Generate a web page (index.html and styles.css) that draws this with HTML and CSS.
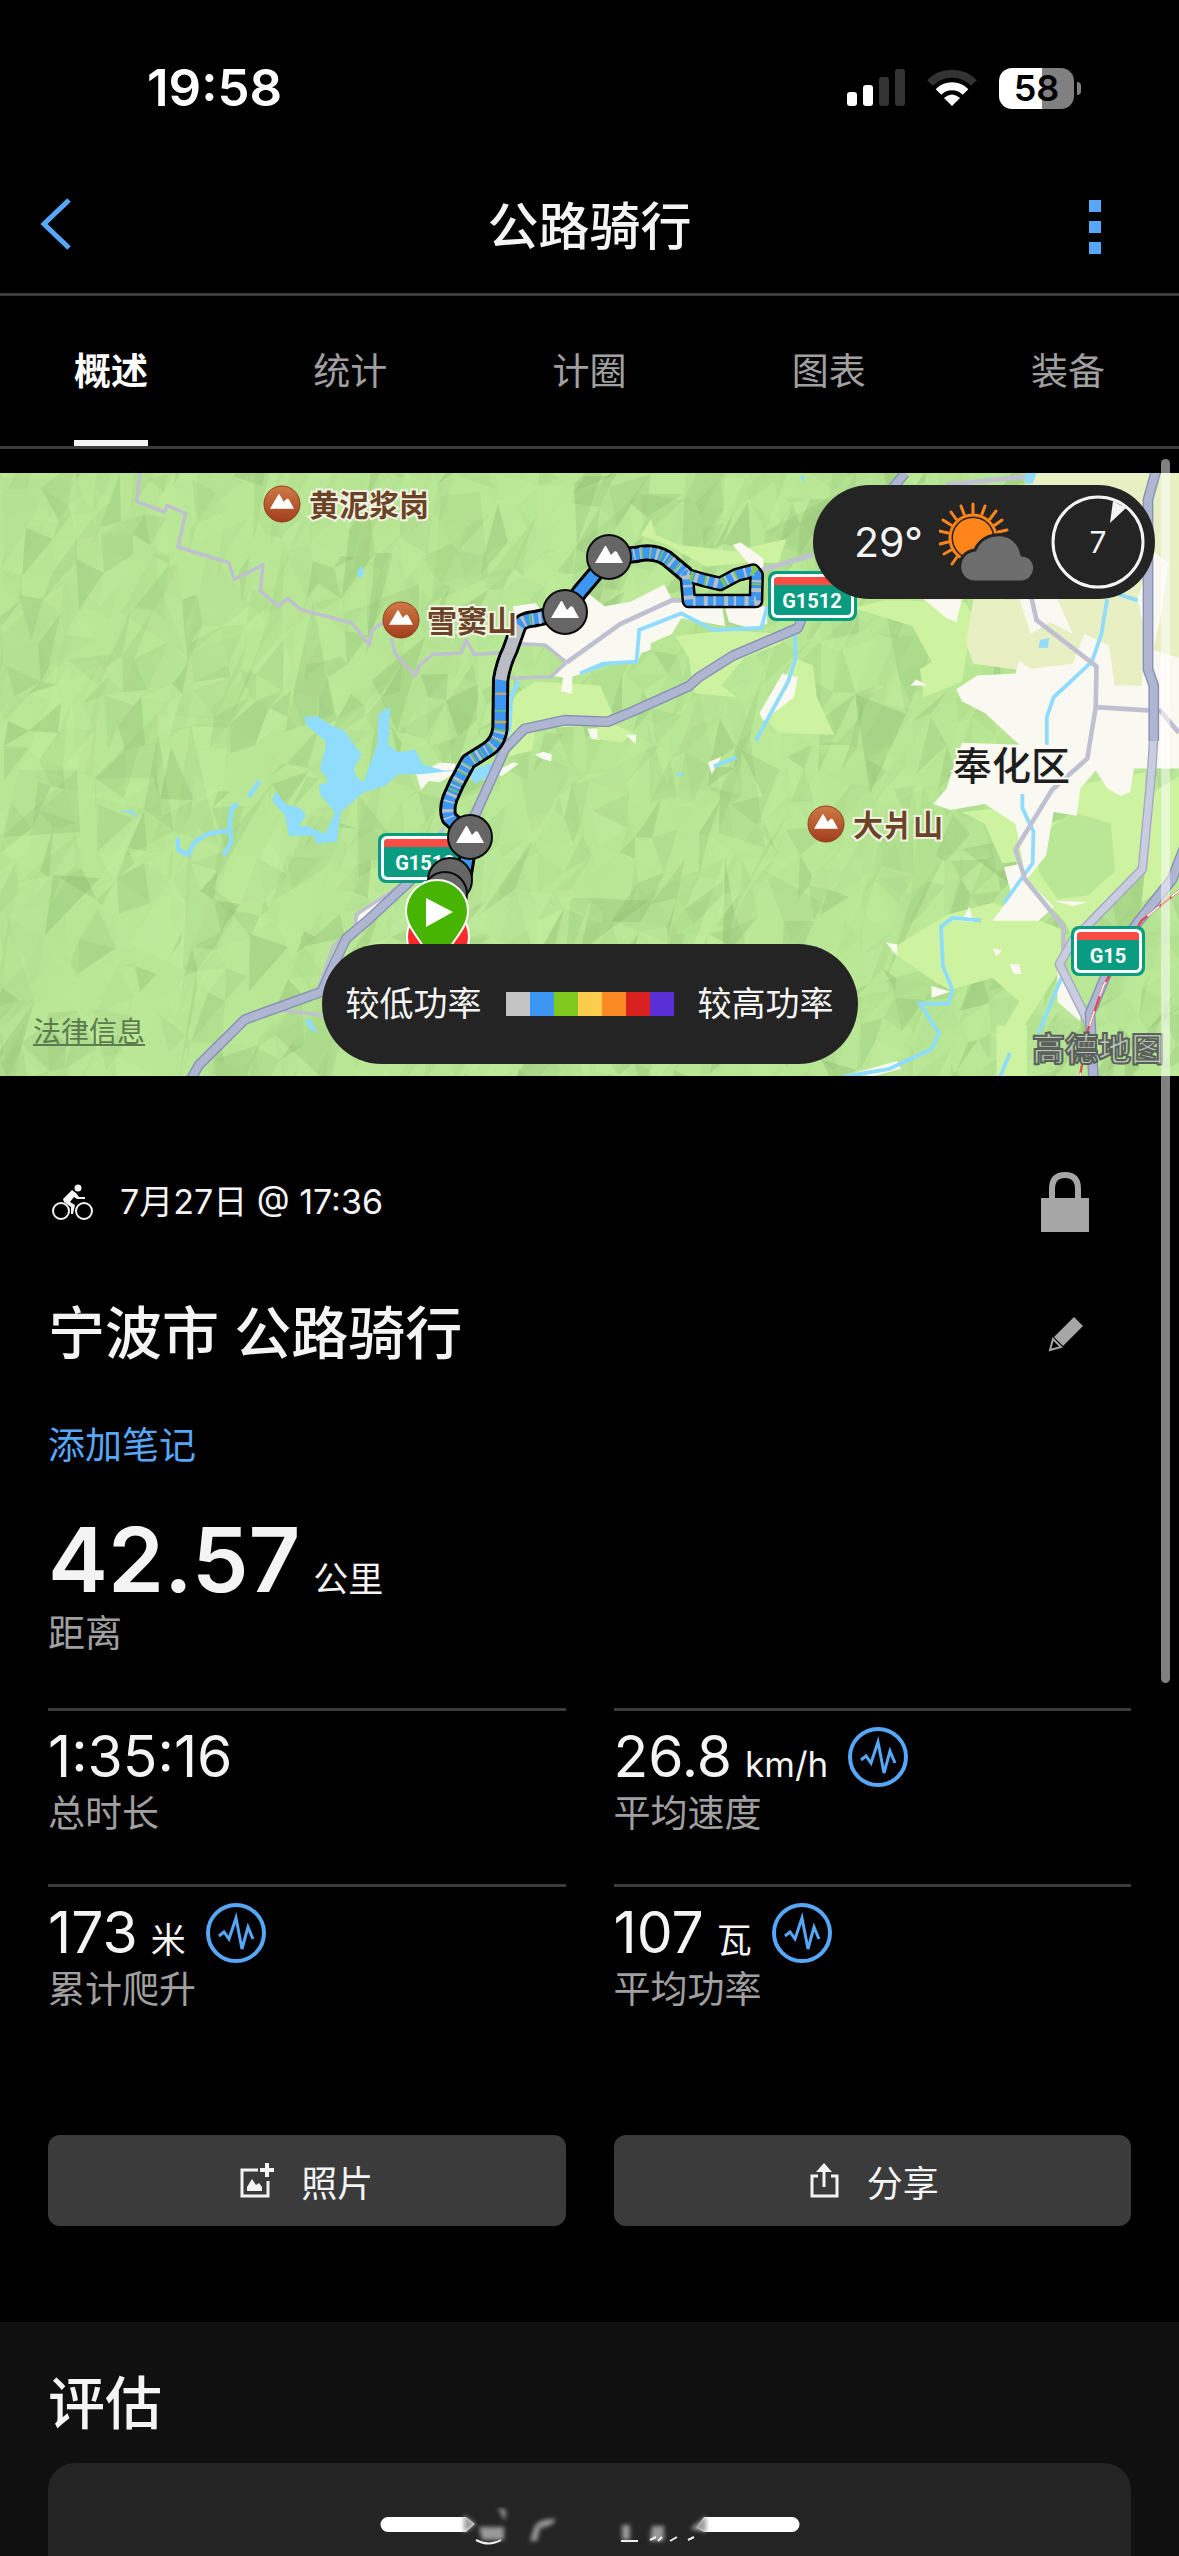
FILE: index.html
```html
<!DOCTYPE html>
<html lang="zh-CN">
<head>
  <meta charset="utf-8">
  <meta name="viewport" content="width=device-width, initial-scale=1">
  <title>公路骑行</title>
  <link rel="stylesheet" href="styles.css">
</head>
<body>
  <!-- shared icons -->
  <svg class="sprite" aria-hidden="true">
    <symbol id="peaks" viewBox="0 0 28 18">
      <path fill="#fff" d="M0 18 L10 1 L11 1 L16 10 L20 6 L22 7 L28 18 Z"/>
    </symbol>
    <symbol id="pulse" viewBox="0 0 60 60">
      <circle cx="30" cy="30" r="28" fill="none" stroke="#56a7f7" stroke-width="4"/>
      <path d="M13 33 L18 29 L23 36 L30 15 L36 46 L42 24 L47 36" fill="none" stroke="#56a7f7" stroke-width="3"/>
    </symbol>
  </svg>

  <div class="status-bar">
    <span class="clock">19:58</span>
    <div class="status-icons">
      <svg width="58" height="38" viewBox="0 0 58 38">
        <rect x="0" y="23" width="10" height="14" rx="3" fill="#fff"/>
        <rect x="16" y="16" width="10" height="21" rx="3" fill="#fff"/>
        <rect x="32" y="8" width="10" height="29" rx="3" fill="#333"/>
        <rect x="48" y="0" width="10" height="37" rx="3" fill="#333"/>
      </svg>
      <svg width="50" height="38" viewBox="0 0 50 38">
        <path d="M3 14 A31 31 0 0 1 47 14" fill="none" stroke="#333" stroke-width="8"/>
        <path d="M11.500 23 A19 19 0 0 1 38.500 23" fill="none" stroke="#fff" stroke-width="8"/>
        <path d="M17 29 Q25 22 33 29 L25 37 Z" fill="#fff"/>
      </svg>
      <div class="battery"><span class="battery-level">58</span></div>
    </div>
  </div>

  <header class="header">
    <button class="icon-button" aria-label="返回">
      <svg width="32" height="58" viewBox="0 0 32 58"><path d="M29 2 L4 26 L29 50" fill="none" stroke="#56a7f7" stroke-width="5"/></svg>
    </button>
    <h1 class="header-title">公路骑行</h1>
    <button class="icon-button" aria-label="更多">
      <svg width="12" height="54" viewBox="0 0 12 54" fill="#56a7f7"><path d="M0 0h12v12H0zM0 21h12v12H0zM0 42h12v12H0z"/></svg>
    </button>
  </header>

  <nav class="tabs">
    <a class="tab active" href="#overview">概述</a>
    <a class="tab" href="#stats">统计</a>
    <a class="tab" href="#laps">计圈</a>
    <a class="tab" href="#charts">图表</a>
    <a class="tab" href="#gear">装备</a>
  </nav>

  <div class="map">
    <svg class="map-canvas" viewBox="0 0 1179 603" preserveAspectRatio="xMidYMid slice">
      <defs>
        <linearGradient id="brown" x1="0" y1="0" x2="0" y2="1">
          <stop offset="0" stop-color="#cf7a45"/><stop offset="1" stop-color="#a23d1d"/>
        </linearGradient>
      </defs>
      <rect width="1179" height="603" fill="#b9e796"/>
      <g id="relief"></g>

      <!-- west side -->
      <g transform="translate(0 -13) scale(.3827 .3954)">
        <path fill="#cdf2a0" d="M1350 590 L1400 560 L1568 570 L1600 640 L1568 670 L1400 680 L1390 735 L1330 750 L1320 650Z"/>
        <path fill="#faf9f1" d="M1340 370 L1400 362 L1430 400 L1500 370 L1540 340 L1580 370 L1700 350 L1700 480 L1568 525 L1495 548 L1495 592 L1465 585 L1472 550 L1440 545 L1480 510 L1420 465 L1360 470ZM1088 795 L1150 765 L1190 768 L1190 790 L1150 815 L1120 812 L1100 835ZM1398 745 L1420 738 L1442 745 L1440 762 L1415 755ZM1290 790 L1340 765 L1355 768 L1310 800ZM1535 680 L1568 685 L1568 708 L1545 705ZM925 1180 L945 1140 L1010 1095 L980 1150Z"/>
        <path fill="#90dcfc" d="M795 650 L830 648 L865 670 L900 685 L945 745 L925 780 L930 800 L950 815 L985 720 L990 640 L1020 625 L1015 720 L1040 740 L1085 732 L1105 770 L1160 785 L1240 780 L1290 765 L1300 785 L1240 820 L1230 800 L1190 785 L1100 795 L1040 795 L1005 825 L950 840 L915 870 L890 890 L880 965 L825 970 L820 950 L755 950 L745 900 L710 860 L722 838 L745 870 L785 880 L800 900 L780 925 L800 925 L850 945 L875 890 L835 845 L835 820 L860 815 L835 780 L850 730 L850 710 L800 670ZM932 285 L945 265 L952 285 L940 302ZM312 887 L345 885 L365 908 L345 895ZM795 1415 L812 1415 L830 1450 L810 1440Z"/>
        <path class="river" stroke-width="12" d="M678 812 L650 852 M622 870 L605 880 L600 925 L605 965 L585 1000 M598 938 L545 945 L510 965 L490 998 L465 985 L465 955"/>
        <path class="river" stroke-width="12" d="M1355 560 L1335 600 L1330 680 L1300 750 M1520 535 L1600 510"/>
        <path class="road" stroke-width="9" d="M365 33 L358 105 L430 132 L437 115 L485 135 L465 220 L598 260 L612 302 L687 265 L680 332 L728 370 L752 350 L785 378 L920 412 L965 468 L972 430 L1020 400M1022 450 L1033 490 L1085 545 L1095 520 L1130 492 L1205 488 L1218 455 L1240 492 L1310 487M1360 465 L1425 468 L1480 512M1335 552 L1440 548 L1480 512M1160 930 L1050 1075 L930 1150 L930 1180 L870 1230 L832 1340M740 1392 L850 1405"/>
      </g>

      <!-- east side, the plain around the town -->
      <g transform="translate(580 -13) scale(.382 .3954)">
        <path fill="#cdf2a0" d="M160 190 L185 150 L200 190 L260 215 L400 230 L540 200 L520 260 L440 260 L330 270 L230 215ZM250 445 L390 430 L540 440 L525 465 L430 500 L370 570 L410 600 L300 590 L285 500ZM560 500 L610 520 L620 600 L665 695 L520 690 L490 660ZM25 680 L90 670 L140 690 L110 715 L45 705ZM600 400 L800 355 L1010 360 L1030 400 L1010 500 L1000 560 L900 600 L890 530 L920 510 L870 420 L700 370ZM1310 820 L1480 790 L1475 1030 L1290 1210 L1270 1170 L1150 1040 L1160 940 L1290 900ZM1000 890 L1100 880 L1160 920 L1155 1015 L1105 1020 L1060 920ZM960 1150 L1080 1120 L1270 1190 L1250 1300 L1130 1480 L1090 1470 L1150 1370 L1080 1310 L970 1340 L930 1320 L810 1240ZM1500 840 L1568 800 L1568 1050 L1470 1120ZM1090 1430 L1170 1430 L1170 1568 L1090 1568Z"/>
        <path fill="#b9e796" d="M1200 950 L1290 890 L1390 920 L1400 1040 L1330 1100 L1250 1110 L1200 1040Z"/>
        <path fill="#e8efc2" d="M1165 33 L1568 33 L1568 560 L1400 575 L1140 530 L1030 515 L1010 460 L1030 352 L1165 352Z"/>
        <path fill="#faf9f1" d="M985 580 L1040 545 L1140 540 L1150 508 L1180 528 L1290 515 L1320 440 L1385 470 L1400 570 L1470 570 L1480 450 L1460 350 L1500 230 L1540 260 L1520 400 L1500 480 L1568 500 L1568 780 L1450 780 L1440 840 L1415 850 L1380 830 L1350 785 L1310 830 L1300 900 L1240 890 L1220 1000 L1170 1060 L1240 1130 L1200 1165 L1080 1165 L1130 1100 L1110 1030 L1160 1020 L1140 920 L1060 870 L970 885 L925 870 L960 830 L980 770 L1000 715 L1150 720 L1060 640 L1000 610ZM900 352 L1000 352 L985 410 L960 400ZM1150 352 L1250 352 L1290 440 L1230 410 L1180 440ZM865 570 L880 555 L910 570ZM400 215 L420 208 L480 250 L480 280 L440 260ZM530 540 L570 550 L560 600 L480 660 L470 640ZM335 765 L370 750 L345 795ZM800 1220 L830 1225 L830 1252ZM1125 1275 L1150 1275 L1155 1300 L1135 1300ZM1080 1235 L1105 1240 L1090 1255ZM960 1160 L1005 1155 L1020 1130 L1030 1170ZM1240 1115 L1330 1118 L1290 1128ZM720 1550 L830 1520 L840 1540 L760 1560ZM1250 1290 L1310 1380 L1310 1420 L1250 1370ZM0 400 L110 370 L170 340 L220 315 L240 350 L370 360 L380 420 L265 400 L240 440 L170 470 L150 510 L60 515 L0 545ZM380 375 L490 370 L490 415 L440 425 L390 410ZM20 680 L45 680 L45 705ZM120 695 L147 695 L145 718ZM920 1330 L970 1345 L920 1360Z"/>
        <path class="river" stroke-width="10" d="M0 540 L60 515 L148 510 L155 430 L265 388 L350 430 L475 425 L490 370M562 440 L565 500 L545 560 L460 710M1380 352 L1365 440 L1340 510 L1240 600 L1222 650 L1222 720M1158 845 L1158 880 L1187 940 L1185 1020 L1110 1120M1050 1165 L975 1158 L945 1180 L950 1280 L975 1340 L965 1375 L890 1375 L940 1450 L920 1490 L810 1540 L690 1560M1260 1310 L1200 1450M410 752 L350 775M1125 1500 L1100 1560M1410 340 L1460 355"/>
        <path fill="#90dcfc" d="M1205 455 L1228 450 L1225 475 L1200 475ZM245 795 L270 788 L265 800ZM1165 33 L1195 33 L1185 60 L1165 60ZM575 40 L588 40 L585 58Z"/>
        <path class="road" stroke-width="12" d="M1180 340 L1195 405 L1352 522 L1350 625 L1328 755 L1235 835 L1140 985 L1165 1060 L1265 1180 L1265 1240M1350 625 L1520 635 L1568 690M610 240 L470 280M960 62 L1165 42M-35 512 L105 415 L240 355 L290 355"/>
        <g fill="none" stroke-linejoin="round">
          <path stroke="#a3a8c4" stroke-width="25" d="M1502 700 L1497 780 L1472 1035 L1290 1215 L1255 1275 L1330 1420"/>
          <path stroke="#cacde0" stroke-width="18" d="M1502 700 L1497 780 L1472 1035 L1290 1215 L1255 1275 L1330 1420"/>
          <path stroke="#8790b4" stroke-width="28" d="M1510 20 L1487 100 L1487 530 L1502 570 L1502 710M1590 960 L1550 1060 L1460 1170 L1400 1250 L1335 1400 L1345 1580"/>
          <path stroke="#afb6d2" stroke-width="21" d="M1510 20 L1487 100 L1487 530 L1502 570 L1502 710M1590 960 L1550 1060 L1460 1170 L1400 1250 L1335 1400 L1345 1580"/>
          <path stroke="#e0484c" stroke-width="6" d="M1580 1080 L1470 1165 L1370 1330 L1330 1440 L1305 1580"/>
          <path stroke="#fff" stroke-width="4" stroke-dasharray="40 40" d="M1580 1080 L1470 1165 L1370 1330 L1330 1440 L1305 1580"/>
        </g>
      </g>

      <!-- motorway G1512 -->
      <g transform="translate(0 -13) scale(.3827 .3954)" fill="none" stroke-linejoin="round">
        <path stroke="#8790b4" stroke-width="27" d="M490 1580 L520 1530 L640 1415 L740 1380 L840 1345 L880 1260 L905 1210 L960 1165 L1060 1075 L1240 900 L1320 730 L1370 680 L1475 658 L1588 662 L1655 635 L1800 572 L1825 550 L1915 495 L2085 425 L2125 330 L2215 210 L2365 33"/>
        <path stroke="#afb6d2" stroke-width="20" d="M490 1580 L520 1530 L640 1415 L740 1380 L840 1345 L880 1260 L905 1210 L960 1165 L1060 1075 L1240 900 L1320 730 L1370 680 L1475 658 L1588 662 L1655 635 L1800 572 L1825 550 L1915 495 L2085 425 L2125 330 L2215 210 L2365 33"/>
      </g>

      <!-- road shields -->
      <g class="shield">
        <rect x="768" y="98" width="89" height="50" rx="8" fill="#0a9c80"/>
        <rect x="771" y="101" width="83" height="44" rx="6" fill="#fff"/>
        <rect x="774" y="104" width="77" height="38" rx="4" fill="#0a9c80"/>
        <path fill="#fa4b44" d="M774 112 V108 Q774 104 778 104 H847 Q851 104 851 108 V112Z"/>
        <text x="812" y="135">G1512</text>
        <rect x="378" y="360" width="89" height="50" rx="8" fill="#0a9c80"/>
        <rect x="381" y="363" width="83" height="44" rx="6" fill="#fff"/>
        <rect x="384" y="366" width="77" height="38" rx="4" fill="#0a9c80"/>
        <path fill="#fa4b44" d="M384 374 V370 Q384 366 388 366 H457 Q461 366 461 370 V374Z"/>
        <text x="425" y="397">G1512</text>
        <rect x="1071" y="453" width="74" height="50" rx="8" fill="#0a9c80"/>
        <rect x="1074" y="456" width="68" height="44" rx="6" fill="#fff"/>
        <rect x="1077" y="459" width="62" height="38" rx="4" fill="#0a9c80"/>
        <path fill="#fa4b44" d="M1077 467 V463 Q1077 459 1081 459 H1135 Q1139 459 1139 463 V467Z"/>
        <text x="1108" y="490">G15</text>
      </g>

      <!-- ride track, coloured by power -->
      <g transform="translate(360 47) scale(.3333)" fill="none" stroke-linejoin="round">
        <path stroke="#000" stroke-width="52" d="M310 1080 L331 950 L268 895 Q258 870 270 835 L290 790 L325 725 L380 690 Q415 670 420 625 L422 480 Q430 430 450 390 L475 320 Q485 300 520 297 L616 276 L660 215 L748 111 L830 103 Q880 90 920 115 L980 165"/>
        <path stroke="#000" stroke-width="44" d="M980 165 L1030 180 L1080 192 L1130 165 L1180 152 L1190 165 L1188 243 L987 243 Z"/>
        <g stroke-width="34">
          <path stroke="#3c96f2" d="M310 1080 L331 950 L268 895 Q258 870 270 835 L290 790 L325 725 L380 690 Q415 670 420 625 L422 480 Q430 430 450 390 L475 320 Q485 300 520 297 L616 276 L660 215 L748 111 L830 103 Q880 90 920 115 L980 165"/>
          <path stroke="#b9bdc2" d="M422 480 Q430 430 450 390 L475 320"/>
          <path stroke="#b4bfc6" stroke-dasharray="5 14 9 21" d="M268 895 Q258 870 270 835 L290 790 L325 725 L380 690 Q415 670 420 625 M475 320 Q485 300 520 297 L560 292 M820 103 Q880 90 920 115 L980 165"/>
          <path stroke="#6bbd73" stroke-dasharray="4 27 6 22" stroke-dashoffset="8" d="M270 835 L290 790 L325 725 L380 690 Q415 670 420 625 L421 570 M485 300 L520 297 M820 103 Q880 90 920 115 L980 165"/>
          <path stroke="#d8a457" stroke-dasharray="6 80" d="M422 610 L422 510"/>
        </g>
        <g stroke-width="29">
          <path stroke="#3c96f2" d="M980 165 L1030 180 L1080 192 L1130 165 L1180 152 L1190 165 L1188 243 L987 243 Z"/>
          <path stroke="#b4bfc6" stroke-dasharray="7 17 12 25" d="M980 165 L1030 180 L1080 192 L1130 165 L1180 152 L1190 165 L1188 243 L987 243 Z"/>
          <path stroke="#7fcc35" stroke-dasharray="8 36 5 50" stroke-dashoffset="-12" d="M980 165 L1030 180 L1080 192 L1130 165 L1180 152 L1190 165 L1188 243"/>
        </g>
      </g>

      <!-- place names -->
      <g stroke="#93401f" fill="url(#brown)">
        <circle cx="282" cy="31" r="18"/><circle cx="401" cy="147" r="18"/><circle cx="826" cy="351" r="18"/>
      </g>
      <use href="#peaks" x="270" y="20" width="24" height="16"/>
      <use href="#peaks" x="389" y="136" width="24" height="16"/>
      <use href="#peaks" x="814" y="340" width="24" height="16"/>
      <g class="peak-name">
        <text x="309" y="43">黄泥浆岗</text>
        <text x="427" y="159">雪窦山</text>
        <text x="853" y="363">大爿山</text>
      </g>
      <text class="town-name" x="953" y="307">奉化区</text>

      <!-- climbs -->
      <g fill="#666" stroke="#0b0b0b" stroke-width="2">
        <circle cx="609" cy="84" r="22"/><circle cx="565" cy="139" r="22"/>
        <circle cx="450" cy="407" r="22"/><circle cx="445" cy="421" r="22"/><circle cx="470" cy="364" r="22"/>
      </g>
      <use href="#peaks" x="595" y="72" width="28" height="18"/>
      <use href="#peaks" x="551" y="127" width="28" height="18"/>
      <use href="#peaks" x="456" y="352" width="28" height="18"/>

      <!-- finish and start -->
      <g stroke="#fff" stroke-width="2">
        <circle cx="438" cy="464" r="31" fill="#fa2a2c"/>
        <path fill="#46b400" d="M437 407 A31 31 0 0 1 468 438 C468 454 454 466 448 478 L437 492 L426 478 C420 466 406 454 406 438 A31 31 0 0 1 437 407Z"/>
      </g>
      <path fill="#fff" d="M426 425 L453 439 L426 454Z"/>

      <text class="map-brand" x="1032" y="588">高德地图</text>
    </svg>

    <a class="legal" href="#legal">法律信息</a>

    <div class="weather">
      <span class="temperature">29°</span>
      <svg width="96" height="80" viewBox="0 0 96 80">
        <circle cx="34" cy="36" r="23" fill="none" stroke="#ff851b" stroke-width="3"/>
        <g stroke="#ff851b" stroke-width="3" stroke-linecap="round">
          <path d="M34 11V2M43 12L46 4M51 17L57 9M56 23L63 18M59 30L68 28M25 12L22 4M17 17L12 10M12 23L4 18M9 31L0 29M9 40L1 42M12 48L5 52M18 55L13 62"/>
        </g>
        <circle cx="34" cy="36" r="20" fill="#ff851b"/>
        <path d="M36 80 C17 80 14 51 36 48 C44 27 79 27 83 53 C102 55 98 80 82 80Z" fill="#6d6d6d" stroke="#242424" stroke-width="3"/>
      </svg>
      <div class="wind">
        <svg width="94" height="94" viewBox="0 0 94 94">
          <circle cx="47" cy="47" r="45" fill="none" stroke="#f4f4f4" stroke-width="3"/>
          <path d="M62 6 L59 28 L75 13Z" fill="#f4f4f4"/>
        </svg>
        <span class="wind-speed">7</span>
      </div>
    </div>

    <div class="legend">
      <span>较低功率</span>
      <div class="legend-scale"><i class="p1"></i><i class="p2"></i><i class="p3"></i><i class="p4"></i><i class="p5"></i><i class="p6"></i><i class="p7"></i></div>
      <span>较高功率</span>
    </div>
  </div>

  <main class="details" id="overview">
    <div class="date-row">
      <svg width="42" height="36" viewBox="0 0 42 36">
        <g fill="none" stroke="#f4f4f4" stroke-width="2">
          <circle cx="9" cy="27" r="8"/><circle cx="32" cy="27" r="8"/>
        </g>
        <circle cx="26" cy="4" r="3.500" fill="#f4f4f4"/>
        <path d="M20 6 L24 9 L27 13 L33 13 V15 H25 L22 13 L18 18 L23 21 L21 30 H19 V23 L12 18 L11 15 Z" fill="#f4f4f4"/>
      </svg>
      <span class="date">7月27日 @ 17:36</span>
      <button class="icon-button" aria-label="隐私">
        <svg width="48" height="60" viewBox="0 0 48 60"><path d="M11 28 V17 Q11 3 24 3 Q37 3 37 17 V28" fill="none" stroke="#a6a6a6" stroke-width="6"/><path d="M0 26H48V60H0Z" fill="#a6a6a6"/></svg>
      </button>
    </div>
    <div class="title-row">
      <h2>宁波市 公路骑行</h2>
      <button class="icon-button" aria-label="编辑">
        <svg width="36" height="36" viewBox="0 0 36 36"><path d="M26 1 L35 10 L15 30 L6 21Z" fill="#a6a6a6"/><path d="M5 23 L13 31 L2 34Z" fill="none" stroke="#a6a6a6" stroke-width="2"/></svg>
      </button>
    </div>
    <a class="add-note" href="#note">添加笔记</a>

    <div class="distance"><span class="distance-number">42.57</span><small>公里</small></div>
    <div class="label">距离</div>

    <div class="stats">
      <div class="stat">
        <div class="value"><span>1:35:16</span></div>
        <div class="label">总时长</div>
      </div>
      <div class="stat">
        <div class="value"><span>26.8<small>km/h</small></span><svg width="60" height="60"><use href="#pulse"/></svg></div>
        <div class="label">平均速度</div>
      </div>
      <div class="stat">
        <div class="value"><span>173<small>米</small></span><svg width="60" height="60"><use href="#pulse"/></svg></div>
        <div class="label">累计爬升</div>
      </div>
      <div class="stat">
        <div class="value"><span>107<small>瓦</small></span><svg width="60" height="60"><use href="#pulse"/></svg></div>
        <div class="label">平均功率</div>
      </div>
    </div>

    <div class="actions">
      <button class="action">
        <svg width="36" height="36" viewBox="0 0 36 36">
          <path d="M18 7 H2 V33 H28 V18" fill="none" stroke="#f4f4f4" stroke-width="3"/>
          <path d="M27 0V14M20 7H34" stroke="#f4f4f4" stroke-width="4"/>
          <path d="M7 28 V24 L12 16 L16 22 L19 20 L22 24 V28Z" fill="#f4f4f4"/>
        </svg>
        照片
      </button>
      <button class="action">
        <svg width="36" height="36" viewBox="0 0 36 36">
          <path d="M12 13 H6 V33 H31 V13 H25 M18 24 V5" fill="none" stroke="#f4f4f4" stroke-width="3"/>
          <path d="M18 0 L26 9 H10Z" fill="#f4f4f4"/>
        </svg>
        分享
      </button>
    </div>
  </main>

  <section class="review">
    <h2>评估</h2>
    <div class="review-card"></div>
  </section>

  <div class="scrollbar"></div>
  <svg class="home-indicator" width="420" height="40" viewBox="0 0 420 40">
    <defs>
      <filter id="soft" x="-20%" y="-20%" width="140%" height="140%"><feGaussianBlur stdDeviation="2"/></filter>
    </defs>
    <path d="M86 10 H8 A7 7 0 0 0 8 25 H86 L95 17Z" fill="#fff"/>
    <path d="M324 10 H412 A7 7 0 0 1 412 25 H324 L316 21Z" fill="#fff"/>
    <g fill="#999" filter="url(#soft)">
      <path d="M84 8 L96 17 L84 26ZM118 1 L126 3 L125 14ZM99 20 H124 V33 H102ZM154 21 Q158 11 176 12 Q172 20 160 21 L157 34 H150ZM242 18 H250 V33 H242ZM272 19 H284 V34 H270ZM326 9 L310 22 L326 25Z"/>
    </g>
    <path d="M96 33 Q109 40 121 33 M241 34 H258 M270 33 L276 30 M278 34 L282 30 M290 34 L297 30 M308 33 L314 30" fill="none" stroke="#eee" stroke-width="2"/>
  </svg>

  <script>
    // Shaded facets of the hills under the map
    var relief = document.getElementById("relief");
    var seed = 11;

    function random() {
      seed = (seed * 16807) % 2147483647;
      return seed / 2147483647;
    }

    function addFacet(points) {
      var facet = document.createElementNS("http://www.w3.org/2000/svg", "polygon");
      var shade = random();
      facet.setAttribute("points", points.join(" "));
      facet.setAttribute("fill", shade < 0.6 ? "#8fbc72" : "#c4f09f");
      facet.setAttribute("fill-opacity", (Math.pow(random(), 3) * 0.4).toFixed(2));
      relief.appendChild(facet);
    }

    // a coarse layer of slopes with a finer layer of ridges on top
    function addLayer(cols, rows, width, height) {
      var grid = [];
      for (var r = 0; r <= rows; r++) {
        grid[r] = [];
        for (var c = 0; c <= cols; c++) {
          var x = (c - 1) * width + random() * width * 1.2;
          var y = (r - 1) * height + random() * height * 1.2;
          grid[r][c] = x.toFixed(0) + "," + y.toFixed(0);
        }
      }
      for (r = 0; r < rows; r++) {
        for (c = 0; c < cols; c++) {
          addFacet([grid[r][c], grid[r][c + 1], grid[r + 1][c]]);
          addFacet([grid[r][c + 1], grid[r + 1][c + 1], grid[r + 1][c]]);
        }
      }
    }

    addLayer(34, 12, 38, 62);
    addLayer(66, 26, 19, 27);
  </script>
</body>
</html>
```
FILE: styles.css
```css
* {
  box-sizing: border-box;
}

body {
  margin: 0;
  min-height: 100vh;
  display: flex;
  flex-direction: column;
  position: relative;
  background-color: #000;
  color: #f4f4f4;
  font-family: Inter, "Noto Sans CJK SC", sans-serif;
  font-size: 36px;
  line-height: 44px;
}

h1,
h2 {
  margin: 0;
  font-weight: 500;
}

h2 {
  font-size: 57px;
  line-height: 64px;
}

a {
  text-decoration: none;
}

svg {
  display: block;
  flex: none;
}

.sprite {
  position: absolute;
  width: 0;
  height: 0;
}

.icon-button {
  padding: 0;
  border: none;
  background: none;
  cursor: pointer;
}

/* status bar */
.status-bar {
  height: 160px;
  padding: 16px 98px 0 147px;
  display: flex;
  align-items: center;
  justify-content: space-between;
}

.clock {
  font-size: 51px;
  font-weight: 600;
  color: #fff;
}

.status-icons {
  display: flex;
  align-items: center;
  gap: 22px;
}

.battery {
  display: flex;
  align-items: center;
  gap: 3px;
}

.battery::after {
  content: "";
  width: 4px;
  height: 13px;
  border-radius: 0 4px 4px 0;
  background-color: #808080;
}

.battery-level {
  width: 75px;
  height: 41px;
  border-radius: 13px;
  background: linear-gradient(to right, #fff 58%, #808080 58%);
  color: #000;
  font-size: 36px;
  font-weight: 600;
  line-height: 41px;
  text-align: center;
}

/* header */
.header {
  height: 136px;
  padding: 0 78px 0 40px;
  display: grid;
  grid-template-columns: 32px 1fr 12px;
  align-items: center;
  border-bottom: 3px solid #3c3c3c;
}

.header-title {
  padding-left: 18px;
  font-size: 51px;
  line-height: 64px;
  text-align: center;
}

.tabs {
  height: 153px;
  padding: 0 74px;
  display: flex;
  justify-content: space-between;
  border-bottom: 3px solid #3c3c3c;
}

.tab {
  padding-top: 54px;
  font-size: 37px;
  color: #a0a0a0;
}

.tab.active {
  color: #fff;
  font-weight: 700;
  border-bottom: 6px solid #f4f4f4;
}

/* map */
.map {
  position: relative;
  height: 603px;
  margin-top: 24px;
  overflow: hidden;
}

.map-canvas {
  width: 100%;
  height: 100%;
}

.river {
  fill: none;
  stroke: #90dcfc;
}

.road {
  fill: none;
  stroke: #bfc0d0;
  stroke-linejoin: round;
}

.shield text {
  font-family: Roboto, sans-serif;
  font-size: 20px;
  font-weight: 700;
  fill: #fff;
  text-anchor: middle;
}

.peak-name {
  font-size: 30px;
  font-weight: 700;
  fill: #6b4427;
  stroke: #f1f3e2;
  stroke-width: 4px;
  paint-order: stroke;
}

.town-name {
  font-size: 39px;
  font-weight: 500;
  fill: #1e1e1e;
  stroke: #faf9f1;
  stroke-width: 4px;
  paint-order: stroke;
}

.map-brand {
  font-size: 33px;
  font-weight: 700;
  fill: #b9c2b4;
  stroke: #59615a;
  stroke-width: 2px;
}

.legal {
  position: absolute;
  left: 33px;
  bottom: 24px;
  font-size: 28px;
  line-height: 40px;
  color: #5c7b4e;
  text-decoration: underline;
}

.weather,
.legend {
  position: absolute;
  display: flex;
  align-items: center;
  border-radius: 60px;
  background-color: #242424;
}

.weather {
  top: 12px;
  right: 24px;
  height: 114px;
  padding: 0 10px 0 41px;
  gap: 16px;
}

.temperature {
  font-size: 41px;
}

.wind {
  display: grid;
  place-items: center;
}

.wind > * {
  grid-area: 1 / 1;
}

.wind-speed {
  font-size: 30px;
}

.legend {
  left: 50%;
  bottom: 12px;
  transform: translateX(-50%);
  height: 120px;
  padding: 0 24px;
  gap: 24px;
  font-size: 34px;
  white-space: nowrap;
}

.legend-scale {
  display: flex;
}

.legend-scale i {
  width: 24px;
  height: 24px;
}

.p1 { background-color: #c4c4c4; }
.p2 { background-color: #3c96f2; }
.p3 { background-color: #7fc81e; }
.p4 { background-color: #fccc4c; }
.p5 { background-color: #fb8a24; }
.p6 { background-color: #d8201f; }
.p7 { background-color: #5b2fd6; }

/* activity details */
.details {
  padding: 96px 48px;
}

.date-row,
.title-row {
  display: flex;
  align-items: center;
  padding-right: 42px;
}

.date-row {
  padding-left: 4px;
}

.date {
  margin-left: 26px;
  font-size: 34px;
}

.date-row .icon-button,
.title-row .icon-button {
  margin-left: auto;
}

.title-row {
  margin-top: 70px;
  padding-right: 47px;
}

.add-note {
  display: block;
  margin-top: 58px;
  font-size: 37px;
  color: #56a7f7;
}

.distance {
  display: flex;
  align-items: baseline;
  margin-top: 44px;
  margin-bottom: 4px;
}

.distance-number {
  font-size: 90px;
  font-weight: 600;
  line-height: 96px;
}

small {
  margin-left: 13px;
  font-size: 35px;
  line-height: 35px;
}

.label {
  font-size: 37px;
  color: #a0a0a0;
}

.stats,
.actions {
  display: grid;
  grid-template-columns: 1fr 1fr;
  column-gap: 48px;
}

.stats {
  margin-top: 52px;
}

.stat {
  padding: 16px 0 48px;
  border-top: 3px solid #3c3c3c;
}

.value {
  display: flex;
  align-items: center;
  gap: 20px;
  height: 60px;
  margin-bottom: 5px;
  font-size: 57px;
  line-height: 60px;
}

.actions {
  margin-top: 75px;
}

.action {
  height: 91px;
  display: flex;
  align-items: center;
  justify-content: center;
  gap: 25px;
  border: none;
  border-radius: 12px;
  background-color: #3b3b3b;
  color: #f4f4f4;
  font-family: inherit;
  font-size: 36px;
  cursor: pointer;
}

.review {
  flex: 1;
  display: flex;
  flex-direction: column;
  padding: 50px 48px 0;
  background-color: #101010;
}

.review-card {
  flex: 1;
  min-height: 90px;
  margin-top: 27px;
  border-radius: 27px 27px 0 0;
  background-color: #242424;
}

/* system overlays */
.scrollbar {
  position: absolute;
  top: 459px;
  right: 9px;
  width: 9px;
  height: 1224px;
  border-radius: 5px;
  background-color: rgba(255, 255, 255, 0.5);
}

.home-indicator {
  position: absolute;
  left: 50%;
  bottom: 9px;
  transform: translateX(-50%);
}
```
